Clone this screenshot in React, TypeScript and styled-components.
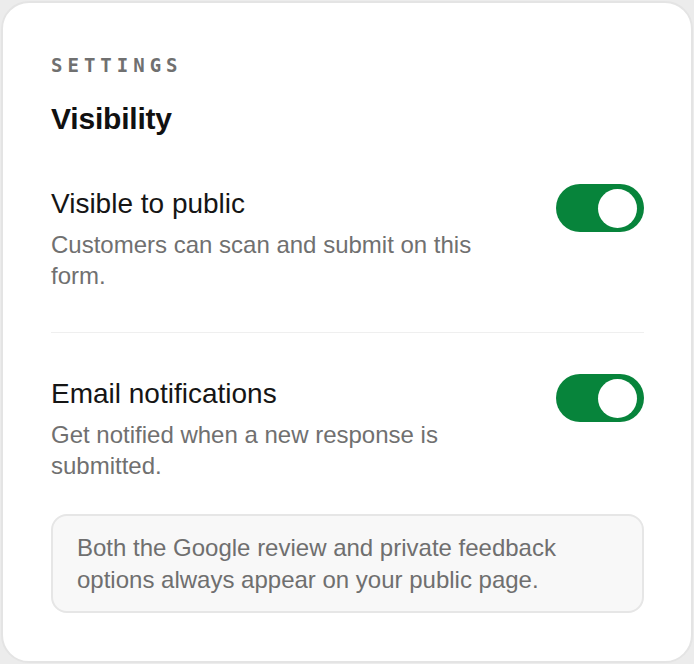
import React, { useState } from 'react';
import styled, { createGlobalStyle } from 'styled-components';

const GlobalStyle = createGlobalStyle`
  html, body {
    margin: 0;
    padding: 0;
    background: #ececec;
  }

  body {
    font-family: 'Liberation Sans', Arial, sans-serif;
    -webkit-font-smoothing: antialiased;
  }
`;

interface Setting {
  id: string;
  title: string;
  description: string;
}

const SETTINGS: Setting[] = [
  {
    id: 'public',
    title: 'Visible to public',
    description: 'Customers can scan and submit on this form.',
  },
  {
    id: 'email',
    title: 'Email notifications',
    description: 'Get notified when a new response is submitted.',
  },
];

const Switch: React.FC<{ checked: boolean; onChange: () => void; label: string }> = ({
  checked,
  onChange,
  label,
}) => (
  <Track
    type="button"
    role="switch"
    aria-checked={checked}
    aria-label={label}
    $on={checked}
    onClick={onChange}
  >
    <Thumb />
  </Track>
);

const App: React.FC = () => {
  const [enabled, setEnabled] = useState<Record<string, boolean>>({
    public: true,
    email: true,
  });

  const toggle = (id: string) => {
    setEnabled(prev => ({ ...prev, [id]: !prev[id] }));
  };

  return (
    <>
      <GlobalStyle />
      <Card>
        <Eyebrow>Settings</Eyebrow>
        <Heading>Visibility</Heading>

        <SettingsList>
          {SETTINGS.map(setting => (
            <Row key={setting.id}>
              <RowText>
                <RowTitle>{setting.title}</RowTitle>
                <RowDescription>{setting.description}</RowDescription>
              </RowText>
              <Switch
                checked={enabled[setting.id]}
                onChange={() => toggle(setting.id)}
                label={setting.title}
              />
            </Row>
          ))}
        </SettingsList>

        <Note>
          Both the Google review and private feedback options always appear on your public page.
        </Note>
      </Card>
    </>
  );
};

const Card = styled.section`
  margin: 1px;
  box-sizing: border-box;
  background: #ffffff;
  border: 2px solid #e4e4e4;
  border-radius: 28px;
  padding: 52px 47px 48px 48px;
`;

const Eyebrow = styled.div`
  font-family: 'DejaVu Sans Mono', 'Liberation Mono', monospace;
  font-size: 19px;
  font-weight: 700;
  line-height: 20px;
  letter-spacing: 5px;
  text-transform: uppercase;
  color: #707070;
`;

const Heading = styled.h2`
  margin: 26px 0 0;
  font-size: 30px;
  font-weight: 700;
  line-height: 36px;
  letter-spacing: -0.2px;
  color: #111111;
`;

const SettingsList = styled.div`
  margin-top: 47px;
`;

const Row = styled.div`
  display: flex;
  align-items: flex-start;
  gap: 48px;
  padding-bottom: 41px;

  & + & {
    border-top: 1px solid #efefef;
    padding-top: 41px;
  }

  &:last-child {
    padding-bottom: 0;
  }
`;

const RowText = styled.div`
  flex: 1;
  min-width: 0;
`;

const RowTitle = styled.div`
  font-size: 28px;
  line-height: 39px;
  color: #151515;
`;

const RowDescription = styled.p`
  margin: 6px 0 0;
  font-size: 24px;
  line-height: 31px;
  color: #707070;
`;

const Track = styled.button<{ $on: boolean }>`
  flex-shrink: 0;
  display: flex;
  align-items: center;
  justify-content: ${p => (p.$on ? 'flex-end' : 'flex-start')};
  width: 88px;
  height: 48px;
  padding: 0 7px;
  box-sizing: border-box;
  border: none;
  border-radius: 24px;
  background: ${p => (p.$on ? '#07843b' : '#cfcfcf')};
  cursor: pointer;
`;

const Thumb = styled.span`
  width: 39px;
  height: 39px;
  border-radius: 50%;
  background: #ffffff;
`;

const Note = styled.p`
  margin: 33px 0 0;
  padding: 16px 24px 15px;
  background: #f8f8f8;
  border: 2px solid #e6e6e6;
  border-radius: 16px;
  font-size: 24px;
  line-height: 32px;
  color: #6f6f6f;
`;

export default App;
